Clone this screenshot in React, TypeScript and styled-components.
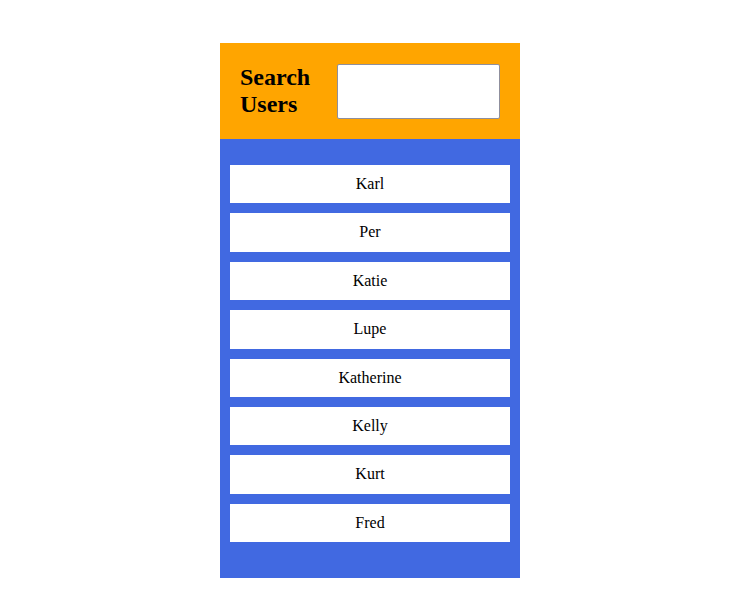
import styled, { createGlobalStyle } from "styled-components";

const GlobalStyle = createGlobalStyle`
  body {
    margin: 0;
    background: #fff;
    font-family: "Liberation Serif", "Times New Roman", serif;
  }
`

const Page = styled.main`
  display: flex;
  justify-content: center;
  padding: 43px 7px 0 0;
`

const Panel = styled.section`
  width: 300px;
  display: flex;
  flex-direction: column;
`

const Header = styled.header`
  height: 96px;
  background: #ffa500;
  display: flex;
  align-items: center;
  justify-content: space-between;
  padding: 0 20px;
  box-sizing: border-box;
`

const Title = styled.h2`
  margin: 0;
  font-size: 24px;
  font-weight: bold;
  line-height: 27px;
  color: #000;
`

const SearchInput = styled.input`
  flex: 0 0 163px;
  width: 163px;
  height: 55px;
  box-sizing: border-box;
  border: 1px solid #8f8f9d;
  border-radius: 2px;
  background: #fff;
  font-family: inherit;
  font-size: 16px;
  padding: 0 6px;
`

const UserList = styled.ul`
  list-style: none;
  margin: 0;
  background: #4169e1;
  padding: 26px 10px 36px;
  display: flex;
  flex-direction: column;
  gap: 10px;
`

const UserItem = styled.li`
  padding: 10px 0;
  line-height: 18.4px;
  background: #fff;
  text-align: center;
  font-size: 16px;
  color: #000;
`

const users = ["Karl", "Per", "Katie", "Lupe", "Katherine", "Kelly", "Kurt", "Fred"]

export default function App() {
    return <>
        <GlobalStyle />
        <Page>
            <Panel>
                <Header>
                    <Title>Search Users</Title>
                    <SearchInput type="text" />
                </Header>
                <UserList>
                    {users.map(name => <UserItem key={name}>{name}</UserItem>)}
                </UserList>
            </Panel>
        </Page>
    </>
}
